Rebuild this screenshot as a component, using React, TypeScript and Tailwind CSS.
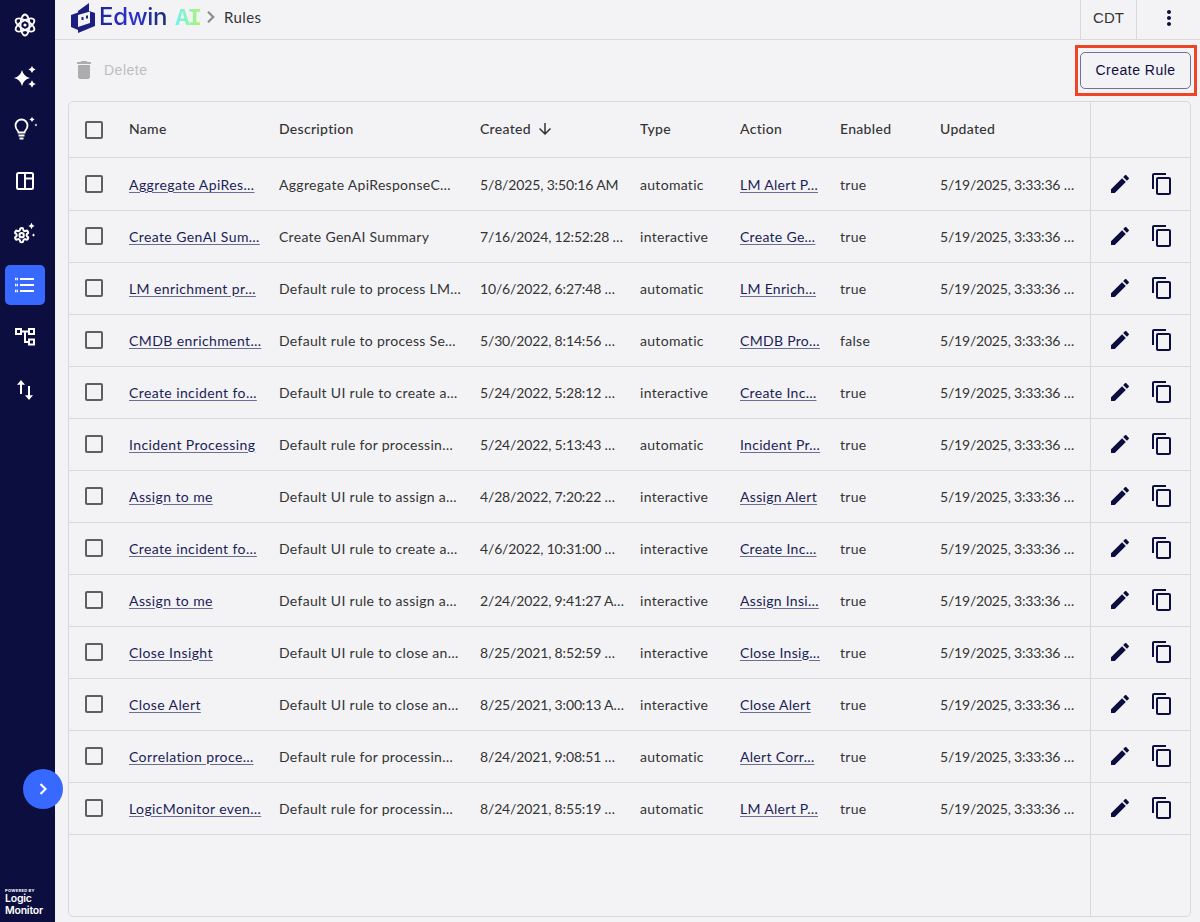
const rows = [
  ["Aggregate ApiRes…", "Aggregate ApiResponseC…", "5/8/2025, 3:50:16 AM", "automatic", "LM Alert P…", "true"],
  ["Create GenAI Sum…", "Create GenAI Summary", "7/16/2024, 12:52:28 …", "interactive", "Create Ge…", "true"],
  ["LM enrichment pr…", "Default rule to process LM…", "10/6/2022, 6:27:48 …", "automatic", "LM Enrich…", "true"],
  ["CMDB enrichment…", "Default rule to process Se…", "5/30/2022, 8:14:56 …", "automatic", "CMDB Pro…", "false"],
  ["Create incident fo…", "Default UI rule to create a…", "5/24/2022, 5:28:12 …", "interactive", "Create Inc…", "true"],
  ["Incident Processing", "Default rule for processin…", "5/24/2022, 5:13:43 …", "automatic", "Incident Pr…", "true"],
  ["Assign to me", "Default UI rule to assign a…", "4/28/2022, 7:20:22 …", "interactive", "Assign Alert", "true"],
  ["Create incident fo…", "Default UI rule to create a…", "4/6/2022, 10:31:00 …", "interactive", "Create Inc…", "true"],
  ["Assign to me", "Default UI rule to assign a…", "2/24/2022, 9:41:27 A…", "interactive", "Assign Insi…", "true"],
  ["Close Insight", "Default UI rule to close an…", "8/25/2021, 8:52:59 …", "interactive", "Close Insig…", "true"],
  ["Close Alert", "Default UI rule to close an…", "8/25/2021, 3:00:13 A…", "interactive", "Close Alert", "true"],
  ["Correlation proce…", "Default rule for processin…", "8/24/2021, 9:08:51 …", "automatic", "Alert Corr…", "true"],
  ["LogicMonitor even…", "Default rule for processin…", "8/24/2021, 8:55:19 …", "automatic", "LM Alert P…", "true"],
];

const Checkbox = () => (
  <svg viewBox="0 0 24 24" className="w-6 h-6 fill-[#5f5f62]">
    <path d="M19 5v14H5V5h14m0-2H5c-1.1 0-2 .9-2 2v14c0 1.1.9 2 2 2h14c1.1 0 2-.9 2-2V5c0-1.1-.9-2-2-2z" />
  </svg>
);

const Sparkle = ({ x, y, r }: { x: number; y: number; r: number }) => (
  <path
    d={`M${x} ${y - r}Q${x + r * 0.2} ${y - r * 0.2} ${x + r} ${y}Q${x + r * 0.2} ${y + r * 0.2} ${x} ${y + r}Q${x - r * 0.2} ${y + r * 0.2} ${x - r} ${y}Q${x - r * 0.2} ${y - r * 0.2} ${x} ${y - r}Z`}
    fill="white"
    stroke="none"
  />
);

const navIcons = [
  <svg key="atom" viewBox="0 0 24 24" className="w-6 h-6" fill="none" stroke="white" strokeWidth="1.8">
    <ellipse cx="12" cy="12" rx="4.5" ry="10.5" />
    <ellipse cx="12" cy="12" rx="4.5" ry="10.5" transform="rotate(60 12 12)" />
    <ellipse cx="12" cy="12" rx="4.5" ry="10.5" transform="rotate(-60 12 12)" />
    <circle cx="12" cy="12" r="1.6" fill="white" stroke="none" />
  </svg>,
  <svg key="spark" viewBox="0 0 24 24" className="w-6 h-6">
    <Sparkle x={9} y={13} r={8} />
    <Sparkle x={19} y={4.5} r={3.6} />
    <Sparkle x={19} y={19} r={3.8} />
  </svg>,
  <svg key="bulb" viewBox="0 0 24 24" className="w-6 h-6" fill="none" stroke="white" strokeWidth="1.8">
    <path d="M5.5 18.500h6M6.500 21.500h4M5.500 15.500c0-2-3-3-3-7a6 6 0 0 1 12 0c0 4-3 5-3 7z" />
    <Sparkle x={19} y={2.5} r={2.6} />
    <Sparkle x={23} y={8} r={1.6} />
  </svg>,
  <svg key="layout" viewBox="0 0 24 24" className="w-6 h-6" fill="none" stroke="white" strokeWidth="2">
    <rect x="4" y="4" width="16" height="16" rx="1.5" />
    <path d="M12 4v16M12 9.500h8" />
  </svg>,
  <svg key="gear" viewBox="0 0 24 24" className="w-6 h-6" fill="none" stroke="white" strokeWidth="2">
    <g transform="translate(0 5.500) scale(0.72)" strokeWidth="2.800">
      <path d="M12.220 2h-.44a2 2 0 0 0-2 2v.18a2 2 0 0 1-1 1.730l-.43.25a2 2 0 0 1-2 0l-.15-.08a2 2 0 0 0-2.730.73l-.22.38a2 2 0 0 0 .73 2.730l.15.1a2 2 0 0 1 1 1.720v.51a2 2 0 0 1-1 1.740l-.15.09a2 2 0 0 0-.73 2.730l.22.38a2 2 0 0 0 2.730.73l.15-.08a2 2 0 0 1 2 0l.43.25a2 2 0 0 1 1 1.730V20a2 2 0 0 0 2 2h.44a2 2 0 0 0 2-2v-.18a2 2 0 0 1 1-1.730l.43-.25a2 2 0 0 1 2 0l.15.08a2 2 0 0 0 2.730-.73l.22-.39a2 2 0 0 0-.73-2.730l-.15-.08a2 2 0 0 1-1-1.740v-.5a2 2 0 0 1 1-1.740l.15-.09a2 2 0 0 0 .73-2.730l-.22-.38a2 2 0 0 0-2.730-.73l-.15.08a2 2 0 0 1-2 0l-.43-.25a2 2 0 0 1-1-1.730V4a2 2 0 0 0-2-2z" />
      <circle cx="12" cy="12" r="3" />
    </g>
    <Sparkle x={18.500} y={5} r={3.200} />
    <Sparkle x={20.500} y={14} r={1.800} />
  </svg>,
  <svg key="list" viewBox="0 0 24 24" className="w-6 h-6" fill="none" stroke="white" strokeWidth="1.800">
    <path d="M7 6h14M7 12h14M7 18h14" />
    <path d="M2 6h3M2 12h3M2 18h3" strokeWidth="2.400" strokeDasharray="1.500 0.500" />
  </svg>,
  <svg key="tree" viewBox="0 0 24 24" className="w-6 h-6" fill="none" stroke="white" strokeWidth="2">
    <rect x="3" y="4" width="5" height="5" />
    <rect x="16" y="4" width="5" height="5" />
    <rect x="16" y="14.500" width="5" height="5" />
    <path d="M8 6.500h8M12 6.500v10.500h4" />
  </svg>,
  <svg key="swap" viewBox="0 0 24 24" className="w-6 h-6" fill="white">
    <path d="M8 3l4 4.800H9V17H7V7.800H4zM15 9h2v9.200h3l-4 4.800-4-4.800h3z" />
  </svg>,
];

const Nav = () => (
  <aside className="w-[55px] shrink-0 bg-[#0c0e3f] flex flex-col items-center relative">
    {navIcons.map((icon, i) => (
      <div
        key={i}
        className={`w-10 h-10 mt-3 first:mt-[5px] rounded-[5px] flex items-center justify-center mr-[5px] ${i === 5 ? "bg-[#3768ff]" : ""}`}
      >
        {icon}
      </div>
    ))}
    <button className="absolute left-[23px] top-[769px] w-10 h-10 rounded-full bg-[#3768ff] flex items-center justify-center z-10">
      <svg viewBox="0 0 24 24" className="w-5 h-5 fill-none stroke-white" strokeWidth="2.600">
        <path d="M9 6l6 6-6 6" />
      </svg>
    </button>
    <div className="mt-auto w-full pl-[5px] pb-[5px] text-white font-['Inter',sans-serif]">
      <div className="text-[4px] leading-[5px] font-bold tracking-[0.08em] whitespace-nowrap">POWERED BY</div>
      <div className="text-[10.5px] leading-[12px] font-semibold tracking-[-0.02em]">Logic</div>
      <div className="text-[10.5px] leading-[12px] font-semibold tracking-[-0.02em]">Monitor</div>
    </div>
  </aside>
);

const Header = () => (
  <header className="h-10 border-b border-[#d9d9dc] flex items-stretch shrink-0">
    <div className="flex items-center pl-[16px] pb-[5px]">
      <svg viewBox="0 0 24 30" className="w-6 h-[30px] mt-[2px]">
        <path d="M0 12l7-2.500V27L0 24z" fill="#1c1f80" />
        <path d="M7 8L18 0v8l6 2v13L7 30z" fill="#1c1f80" />
        <path d="M7 12l12-3.500V20L7 24z" fill="#f3f3f6" />
        <rect x="10.500" y="14" width="2" height="3" fill="#1c1f80" />
        <rect x="15" y="12.500" width="2" height="3" fill="#1c1f80" />
      </svg>
      <span className="ml-[4px] text-[24px] leading-8 font-medium font-['Inter',sans-serif] tracking-[-0.3px] bg-gradient-to-r from-[#1e2596] via-[#2a34d0] to-[#1b2a70] bg-clip-text text-transparent">
        Edwin
      </span>
      <span className="ml-[8px] mt-[3px] text-[24px] leading-8 font-bold font-['Liberation_Mono',monospace] tracking-[-2px] bg-gradient-to-r from-[#6ff0f0] to-[#a8f56c] bg-clip-text text-transparent">
        AI
      </span>
      <svg viewBox="0 0 24 24" className="w-[18px] h-[18px] ml-[2px] fill-none stroke-[#8d8d90]" strokeWidth="3">
        <path d="M8 5l7 7-7 7" />
      </svg>
      <span className="ml-[4px] text-[15px] text-[#333] tracking-[0.4px]">Rules</span>
    </div>
    <div className="ml-auto w-14 pb-[3px] border-l border-[#d9d9dc] flex items-center justify-center text-[15px] text-[#333] font-['Liberation_Sans',sans-serif]">
      CDT
    </div>
    <div className="w-16 pb-[3px] border-l border-[#d9d9dc] flex items-center justify-center">
      <svg viewBox="0 0 24 24" className="w-6 h-6 fill-[#0c0e3f]">
        <path d="M12 8c1.100 0 2-.9 2-2s-.9-2-2-2-2 .9-2 2 .9 2 2 2zm0 2c-1.100 0-2 .9-2 2s.9 2 2 2 2-.9 2-2-.9-2-2-2zm0 6c-1.100 0-2 .9-2 2s.9 2 2 2 2-.9 2-2-.9-2-2-2z" />
      </svg>
    </div>
  </header>
);

const Toolbar = () => (
  <div className="h-[61px] shrink-0 flex items-center justify-between pl-[17px] pr-[3px]">
    <div className="flex items-center gap-[6px] text-[#bdbdc0] pb-[1px]">
      <svg viewBox="0 0 24 24" className="w-6 h-6 fill-[#adadb0]">
        <path d="M6 19c0 1.100.9 2 2 2h8c1.100 0 2-.9 2-2V7H6v12zM19 4h-3.500l-1-1h-5l-1 1H5v2h14V4z" />
      </svg>
      <span className="ml-[2px] text-sm tracking-[0.5px] font-['Liberation_Sans',sans-serif]">Delete</span>
    </div>
    <div className="border-[3px] border-[#ee4526] pl-[2px] pr-[3px] py-1 flex">
      <button className="w-[111px] h-[37px] pb-[2px] rounded-[5px] border border-[#70729a] text-sm text-[#0c0e3f] font-['Liberation_Sans',sans-serif] tracking-[0.5px]">
        Create Rule
      </button>
    </div>
  </div>
);

const cols = ["w-[48px]", "w-[150px]", "w-[201px]", "w-[160px]", "w-[100px]", "w-[100px]", "w-[100px]", "w-[162px]"];

const linkCls = "text-[#1b1d55] underline underline-offset-2 decoration-[#6c6d90]";

const Row = ({ r }: { r: string[] }) => (
  <div className="group flex h-[52px] first-of-type:h-[53px] first-of-type:pt-[2px] border-b border-[#d9d9dc] items-stretch text-sm text-[#333] tracking-[0.3px]">
    <div className={`${cols[0]} pl-[13px] pb-[2px] flex items-center`}>
      <Checkbox />
    </div>
    <div className={`${cols[1]} pl-3 flex items-center whitespace-nowrap tracking-[0.4px]`}>
      <a className={linkCls}>{r[0]}</a>
    </div>
    <div className={`${cols[2]} pl-3 flex items-center whitespace-nowrap`}>{r[1]}</div>
    <div className={`${cols[3]} pl-3 flex items-center whitespace-nowrap tracking-[-0.15px]`}>{r[2]}</div>
    <div className={`${cols[4]} pl-3 flex items-center whitespace-nowrap`}>{r[3]}</div>
    <div className={`${cols[5]} pl-3 flex items-center whitespace-nowrap`}>
      <a className={linkCls}>{r[4]}</a>
    </div>
    <div className={`${cols[6]} pl-3 flex items-center`}>{r[5]}</div>
    <div className={`${cols[7]} pl-3 flex items-center whitespace-nowrap tracking-[-0.2px]`}>5/19/2025, 3:33:36 …</div>
    <div className="flex-1 border-l border-[#d9d9dc] flex items-center pl-[17px] pb-[2px] gap-[18px] group-first-of-type:-mt-[2px] group-first-of-type:pb-0">
      <svg viewBox="0 0 24 24" className="w-6 h-6 fill-[#0c0e3f]">
        <path d="M3 17.250V21h3.750L17.810 9.940l-3.750-3.750L3 17.250zM20.710 7.040c.39-.39.39-1.020 0-1.410l-2.340-2.340c-.39-.39-1.020-.39-1.410 0l-1.830 1.830 3.750 3.750 1.830-1.830z" />
      </svg>
      <svg viewBox="0 0 24 24" className="w-6 h-6 fill-[#0c0e3f]">
        <path d="M16 1H4c-1.100 0-2 .9-2 2v14h2V3h12V1zm3 4H8c-1.100 0-2 .9-2 2v14c0 1.100.9 2 2 2h11c1.100 0 2-.9 2-2V7c0-1.100-.9-2-2-2zm0 16H8V7h11v14z" />
      </svg>
    </div>
  </div>
);

const Table = () => (
  <div className="flex-1 min-h-0 ml-[13px] mr-[9px] mb-[5px] border border-[#d9d9dc] rounded-[5px] flex flex-col overflow-hidden">
    <section className="flex h-[56px] shrink-0 border-b border-[#d9d9dc] items-stretch text-sm text-[#333] tracking-[0.3px]">
      <div className={`${cols[0]} pl-[13px] flex items-center`}>
        <Checkbox />
      </div>
      {["Name", "Description", "Created", "Type", "Action", "Enabled", "Updated"].map((h, i) => (
        <div key={h} className={`${cols[i + 1]} pl-3 pb-[2px] flex items-center font-medium`}>
          {h}
          {h === "Created" && (
            <svg viewBox="0 0 24 24" className="w-[18px] h-[18px] ml-[5px] fill-[#333]">
              <path d="M20 12l-1.410-1.410L13 16.170V4h-2v12.170l-5.580-5.590L4 12l8 8 8-8z" />
            </svg>
          )}
        </div>
      ))}
      <div className="flex-1 border-l border-[#d9d9dc]" />
    </section>
    <div>
      {rows.map((r, i) => (
        <Row key={i} r={r} />
      ))}
    </div>
    <div className="flex-1 flex justify-end">
      <div className="w-[100px] border-l border-[#d9d9dc]" />
    </div>
  </div>
);

export default function App() {
  return (
    <div className="w-[1200px] h-[922px] flex bg-[#f3f3f6] overflow-hidden font-['Lato','Noto_Sans',sans-serif]">
      <Nav />
      <main className="flex-1 min-w-0 flex flex-col">
        <Header />
        <Toolbar />
        <Table />
      </main>
    </div>
  );
}
